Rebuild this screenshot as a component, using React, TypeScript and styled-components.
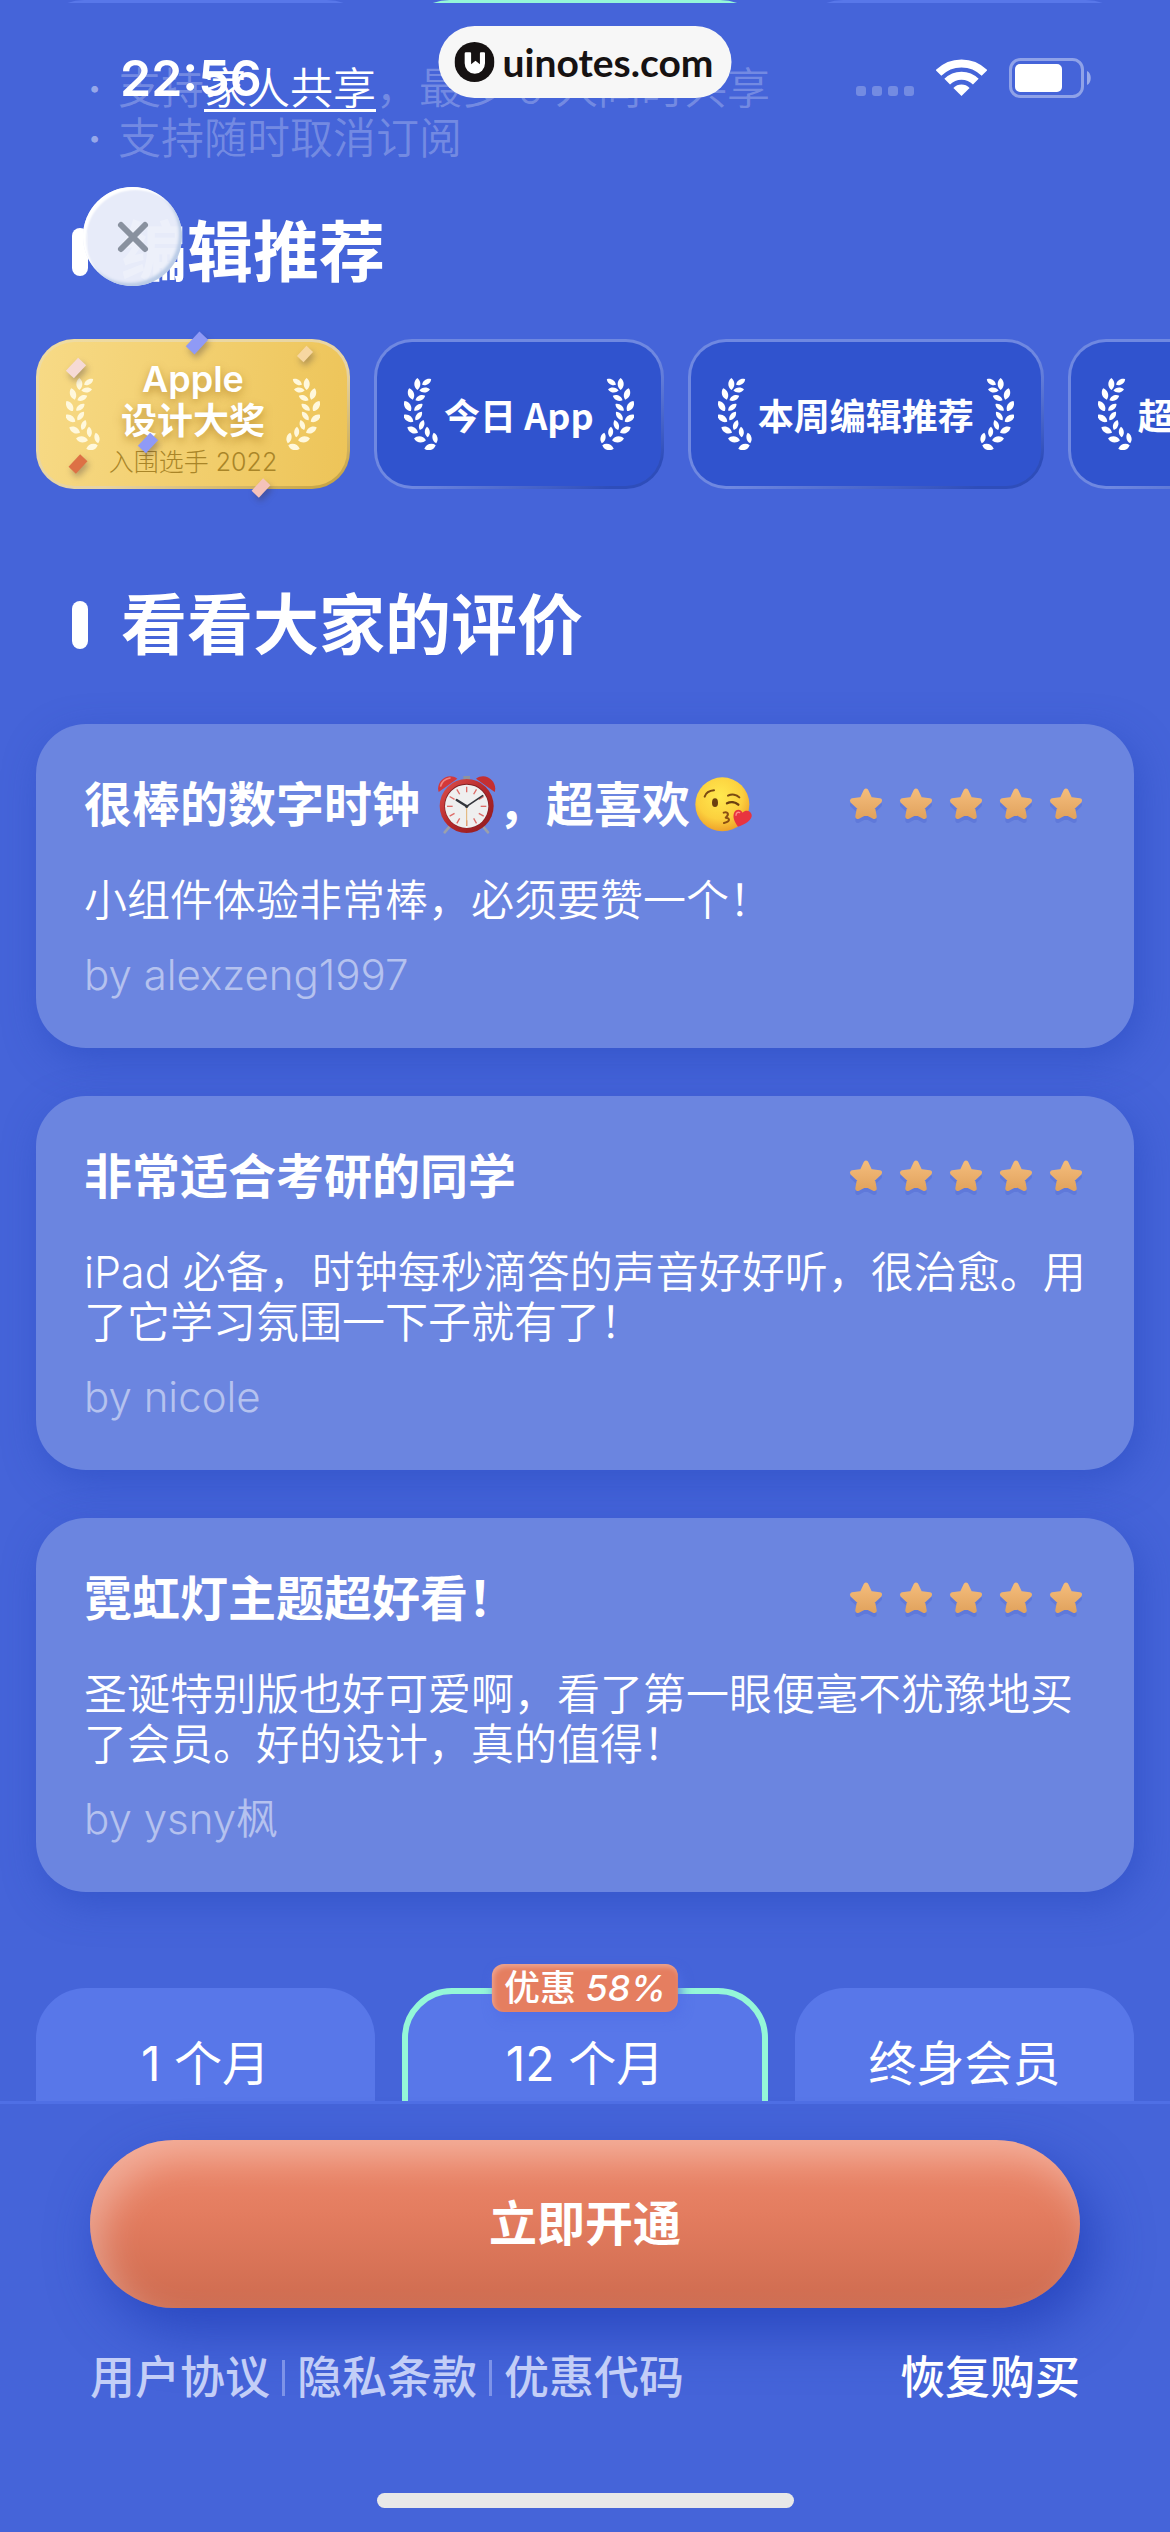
import styled, { createGlobalStyle, ThemeProvider } from "styled-components";

const theme = {
  background: "#4564d9",
  card: "#6b85e0",
  plan: "#5877e9",
  line: "#4f6fe5",
  mint: "#94f7d8",
  coral: "#e57e60",
  white: "#ffffff",
};

const GlobalStyle = createGlobalStyle`
  * {
    box-sizing: border-box;
  }
  body {
    margin: 0;
    background-color: #4564d9;
    font-family: Inter, "Noto Sans CJK SC", sans-serif;
    color: #ffffff;
  }
  button {
    font-family: inherit;
    color: inherit;
    border: none;
    padding: 0;
    background: none;
    cursor: pointer;
  }
  a {
    color: inherit;
  }
`;

const Screen = styled.div`
  position: relative;
  display: flex;
  flex-direction: column;
  height: 100vh;
  background-color: ${(props) => props.theme.background};
`;

const ScrollArea = styled.main`
  flex: 1;
  min-height: 0;
  overflow-x: hidden;
  overflow-y: auto;
  scrollbar-width: none;
`;

/* status bar */

const StatusBar = styled.header`
  position: absolute;
  top: 0;
  left: 0;
  right: 0;
  display: flex;
  align-items: center;
  justify-content: space-between;
  padding: 48px 78px 0 120px;
`;

const Time = styled.span`
  font-size: 50px;
  line-height: 60px;
  font-weight: 600;
`;

const StatusIcons = styled.div`
  display: flex;
  align-items: center;
  gap: 22px;
`;

const SignalDots = styled.div`
  display: flex;
  gap: 6px;
  padding-top: 26px;
  span {
    width: 10px;
    height: 10px;
    border-radius: 3px;
    background-color: rgba(255, 255, 255, 0.25);
  }
`;

const SiteBadge = styled.div`
  position: absolute;
  top: 26px;
  left: 50%;
  transform: translateX(-50%);
  display: flex;
  align-items: center;
  gap: 8px;
  height: 72px;
  padding: 0 18px 0 16px;
  border-radius: 36px;
  background-color: #f7f7f7;
  color: #161212;
  font-family: Lato, sans-serif;
  font-size: 39px;
  font-weight: 700;
`;

const CloseButton = styled.button`
  position: absolute;
  top: 187px;
  left: 83px;
  display: flex;
  align-items: center;
  justify-content: center;
  width: 99px;
  height: 99px;
  border-radius: 50%;
  background-color: rgba(236, 240, 250, 0.97);
  box-shadow: inset 3px 3px 2px #ffffff, inset -3px -3px 3px #b9cbe6;
`;

/* content */

const PreviousPlans = styled.div`
  display: grid;
  grid-template-columns: 339fr 366fr 339fr;
  gap: 27px;
  align-items: end;
  height: 3px;
  padding: 0 36px;
  overflow: hidden;
`;

const PlanEdge = styled.div<{ $active?: boolean }>`
  height: 100px;
  border-radius: 48px;
  background-color: ${(props) => props.theme.plan};
  border: ${(props) => (props.$active ? `6px solid ${props.theme.mint}` : "none")};
`;

const Notes = styled.ul`
  margin: 0;
  padding: 60px 36px 0 86px;
  list-style: none;
  font-size: 43px;
  line-height: 50px;
  font-weight: 350;
  color: rgba(255, 255, 255, 0.26);
  li {
    display: flex;
    gap: 15px;
    white-space: nowrap;
  }
  a {
    color: ${(props) => props.theme.white};
    text-decoration-thickness: 3px;
    text-underline-offset: 5px;
  }
`;

const Bullet = styled.span`
  width: 17px;
  text-align: center;
  color: rgba(255, 255, 255, 0.45);
  font-weight: 600;
`;

const SectionTitle = styled.h2<{ $top: number; $bottom: number }>`
  display: flex;
  align-items: center;
  gap: 33px;
  margin: ${(props) => `${props.$top}px 0 ${props.$bottom}px`};
  padding-left: 72px;
  font-size: 66px;
  line-height: 80px;
  font-weight: 600;
  &::before {
    content: "";
    width: 16px;
    height: 48px;
    border-radius: 8px;
    background-color: ${(props) => props.theme.white};
  }
`;

const Awards = styled.div`
  display: flex;
  gap: 24px;
  padding-left: 36px;
`;

const AwardCard = styled.div<{ $gold?: boolean }>`
  position: relative;
  flex: none;
  display: flex;
  align-items: center;
  justify-content: space-between;
  gap: 6px;
  min-width: ${(props) => (props.$gold ? "314px" : "0")};
  height: 150px;
  padding: 0 27px;
  border: 3px solid transparent;
  border-radius: 38px;
  font-family: "Noto Sans CJK SC", sans-serif;
  font-size: 36px;
  line-height: 40px;
  font-weight: 600;
  white-space: nowrap;
  background: ${(props) =>
    props.$gold
      ? `linear-gradient(100deg, #f7da86, #edc458) padding-box,
         linear-gradient(to bottom right, #f0dca0, #e6d3a4 60%, #c39f3a) border-box`
      : `linear-gradient(#3053ce, #3053ce) padding-box,
         linear-gradient(to bottom right, #6f88e1 55%, #2e4dba 90%) border-box`};
`;

const GoldText = styled.div`
  display: flex;
  flex-direction: column;
  align-items: center;
  padding-top: 12px;
  font-family: Inter, "Noto Sans CJK SC", sans-serif;
  line-height: 42px;
  text-shadow: 0 4px 8px rgba(150, 100, 10, 0.5);
  strong {
    font-weight: 600;
  }
  small {
    font-size: 25px;
    line-height: 40px;
    font-weight: 300;
    color: #a98528;
    text-shadow: none;
    margin: 0 -24px;
  }
`;

const Confetti = styled.svg`
  position: absolute;
  top: -18px;
  left: -3px;
  filter: drop-shadow(2px 4px 3px rgba(60, 50, 60, 0.35));
`;

const Reviews = styled.div`
  display: flex;
  flex-direction: column;
  gap: 48px;
  padding: 0 36px;
`;

const ReviewCard = styled.article`
  padding: 51px 48px 48px;
  border-radius: 50px;
  background-color: ${(props) => props.theme.card};
  box-shadow: 6px 12px 36px rgba(38, 72, 190, 0.5);
`;

const ReviewHead = styled.div`
  display: flex;
  align-items: center;
  justify-content: space-between;
  height: 60px;
  h3 {
    display: flex;
    align-items: center;
    margin: 0;
    font-size: 48px;
    line-height: 60px;
    font-weight: 600;
    white-space: pre;
  }
  h3 svg {
    margin-left: 4px;
  }
`;

const Stars = styled.div`
  display: flex;
  gap: 10px;
`;

const ReviewText = styled.p`
  margin: 40px -8px 25px 0;
  font-size: 43px;
  line-height: 50px;
  font-weight: 350;
`;

const ReviewAuthor = styled.div`
  font-size: 42px;
  line-height: 50px;
  font-weight: 350;
  color: rgba(255, 255, 255, 0.5);
`;

const Plans = styled.div`
  display: grid;
  grid-template-columns: 339fr 366fr 339fr;
  gap: 27px;
  padding: 96px 36px 48px;
`;

const Plan = styled.button<{ $active?: boolean }>`
  position: relative;
  display: flex;
  justify-content: center;
  height: 330px;
  padding-top: ${(props) => (props.$active ? "40px" : "46px")};
  border-radius: 50px;
  background-color: ${(props) => props.theme.plan};
  border: ${(props) => (props.$active ? `6px solid ${props.theme.mint}` : "none")};
  font-size: 48px;
  line-height: 60px;
  font-weight: 400;
`;

const Discount = styled.span`
  position: absolute;
  top: -30px;
  left: 50%;
  transform: translateX(-50%);
  height: 48px;
  padding: 0 12px;
  border-radius: 12px;
  background-color: ${(props) => props.theme.coral};
  box-shadow: inset 2px 3px 5px rgba(255, 255, 255, 0.3), 3px 6px 12px rgba(80, 110, 230, 0.8);
  font-size: 36px;
  line-height: 48px;
  font-weight: 500;
  white-space: nowrap;
`;

/* footer */

const Footer = styled.footer`
  position: relative;
  padding: 36px 90px 24px;
  border-top: 3px solid ${(props) => props.theme.line};
  background-color: ${(props) => props.theme.background};
`;

const SubscribeButton = styled.button`
  display: block;
  width: 100%;
  height: 168px;
  border-radius: 84px;
  background: linear-gradient(#ee8a6d, #e37c5f 45%, #ce6b4f);
  box-shadow: inset 12px 18px 36px rgba(255, 255, 255, 0.32), 14px 22px 54px rgba(28, 58, 180, 0.7);
  font-size: 48px;
  line-height: 60px;
  font-weight: 600;
`;

const FooterLinks = styled.nav`
  display: flex;
  align-items: center;
  gap: 12px;
  margin-top: 40px;
  font-size: 45px;
  line-height: 60px;
  font-weight: 500;
  color: #c3cef7;
  a {
    text-decoration: none;
  }
  a:last-child {
    margin-left: auto;
    color: ${(props) => props.theme.white};
  }
`;

const Divider = styled.span`
  width: 3px;
  height: 36px;
  background-color: #7d93e8;
`;

const HomeIndicator = styled.div`
  width: 417px;
  height: 15px;
  margin: 85px auto 0;
  border-radius: 8px;
  background-color: #e8e8e8;
`;

/* drawings */

const outerLeaves = [
  [66, 40, 0],
  [47, 70, -18],
  [37, 106, -32],
  [39, 143, -55],
  [52, 178, -62],
  [74, 206, -82],
  [104, 229, 72],
];

const innerLeaves = [
  [94, 34, 58],
  [88, 58, 84],
  [75, 82, 66],
  [69, 110, 52],
  [70, 136, 38],
  [79, 163, 20],
  [96, 184, -4],
  [119, 202, -14],
];

const Laurel = ({ flip, soft }: { flip?: boolean; soft?: boolean }) => (
  <svg width="34" height="72" viewBox="26 22 102 216" fill={soft ? "#fff8dc" : "#fff"} aria-hidden="true">
    <g transform={flip ? "translate(154 0) scale(-1 1)" : undefined}>
      {outerLeaves.map(([x, y, r]) => (
        <path key={y} d="M0 -18C12 -9 12 9 0 18C-12 9 -12 -9 0 -18Z" transform={`translate(${x} ${y}) rotate(${r})`} />
      ))}
      {innerLeaves.map(([x, y, r]) => (
        <path key={y} d="M0 -16C10 -8 10 8 0 16C-10 8 -10 -8 0 -16Z" transform={`translate(${x} ${y}) rotate(${r})`} />
      ))}
    </g>
  </svg>
);

const Star = () => (
  <svg width="40" height="40" viewBox="0 0 40 40" aria-hidden="true">
    <defs>
      <linearGradient id="star" x1="0" y1="0" x2="0" y2="1">
        <stop offset="0" stopColor="#f3bb7a" />
        <stop offset="1" stopColor="#e2a45f" />
      </linearGradient>
    </defs>
    <path
      d="M20 7L24 15.600L33.500 16.800L26.500 23.300L28.200 32.500L20 28.200L11.800 32.500L13.500 23.300L6.500 16.800L16 15.600Z"
      transform="translate(0 3)"
      fill="#4a64cf"
      stroke="#4a64cf"
      strokeWidth="5"
      strokeLinejoin="round"
      opacity="0.35"
    />
    <path
      d="M20 6L24 14.600L33.500 15.800L26.500 22.300L28.200 31.500L20 27.200L11.800 31.500L13.500 22.300L6.500 15.800L16 14.600Z"
      fill="url(#star)"
      stroke="url(#star)"
      strokeWidth="5"
      strokeLinejoin="round"
    />
  </svg>
);

const ticks = Array.from({ length: 12 }, (_, i) => i * 30);

const ClockEmoji = () => (
  <svg width="62" height="60" viewBox="50 45 186 180" role="img" aria-label="⏰">
    <defs>
      <linearGradient id="ring" x1="0" y1="0" x2="1" y2="1">
        <stop offset="0" stopColor="#e0544f" />
        <stop offset="0.500" stopColor="#b5282b" />
        <stop offset="1" stopColor="#8c1a1f" />
      </linearGradient>
    </defs>
    <path d="M94 196L76 217M188 196L206 217" stroke="#9aa0ad" strokeWidth="8" strokeLinecap="round" />
    <path d="M132 48h20v14h-20z" fill="#8e939e" />
    <path d="M58 96C48 66 84 34 114 56Z" fill="#d3383a" />
    <path d="M226 96C236 66 200 34 170 56Z" fill="#c42f32" />
    <path d="M64 78C68 64 80 56 92 54" stroke="#f08580" strokeWidth="5" fill="none" strokeLinecap="round" />
    <circle cx="142" cy="138" r="81" fill="url(#ring)" />
    <circle cx="142" cy="138" r="67" fill="#7f2024" />
    <circle cx="142" cy="139" r="65" fill="#efefef" />
    {ticks.map((angle) => (
      <path key={angle} d="M142 80v17" stroke="#dd6a66" strokeWidth="4" transform={`rotate(${angle} 142 139)`} />
    ))}
    <path d="M142 139v58" stroke="#e0b070" strokeWidth="3" />
    <path d="M142 139L112 120" stroke="#33363c" strokeWidth="7" strokeLinecap="round" />
    <path d="M142 139L190 107" stroke="#33363c" strokeWidth="5" strokeLinecap="round" />
    <circle cx="142" cy="139" r="5" fill="#33363c" />
  </svg>
);

const KissEmoji = () => (
  <svg width="60" height="58" viewBox="818 50 180 174" role="img" aria-label="😘">
    <defs>
      <radialGradient id="face" cx="0.450" cy="0.350" r="0.650">
        <stop offset="0" stopColor="#ffe94f" />
        <stop offset="0.650" stopColor="#fcd03e" />
        <stop offset="1" stopColor="#eea22a" />
      </radialGradient>
    </defs>
    <circle cx="903" cy="135" r="81" fill="url(#face)" />
    <path d="M850 112C854 100 864 94 878 93" stroke="#7b4a12" strokeWidth="6" fill="none" strokeLinecap="round" />
    <path d="M920 109C932 103 946 106 954 114" stroke="#7b4a12" strokeWidth="6" fill="none" strokeLinecap="round" />
    <ellipse cx="881" cy="130" rx="9" ry="13" fill="#6b3f10" />
    <path d="M917 132C928 126 942 128 951 136" stroke="#6b3f10" strokeWidth="7" fill="none" strokeLinecap="round" />
    <path
      d="M907 160C918 156 926 164 913 175C928 176 926 188 908 191"
      stroke="#8a4f12"
      strokeWidth="6"
      fill="none"
      strokeLinecap="round"
      strokeLinejoin="round"
    />
    <path
      d="M950 202C938 186 934 172 938 161C943 148 958 148 964 160C973 150 988 154 991 166C994 180 972 195 950 202Z"
      fill="#e8343f"
    />
    <path d="M944 168C944 160 950 157 955 160" stroke="#ff8f8c" strokeWidth="4" fill="none" strokeLinecap="round" />
  </svg>
);

const WifiIcon = () => (
  <svg width="51" height="38" viewBox="0 0 51 38" fill="none" aria-hidden="true">
    <path d="M2.500 14A32.500 32.500 0 0 1 48.500 14" stroke="#fff" strokeWidth="8" />
    <path d="M11.200 22.700A20.200 20.200 0 0 1 39.800 22.700" stroke="#fff" strokeWidth="8" />
    <path d="M25.500 37L17.400 29A11.400 11.400 0 0 1 33.600 29Z" fill="#fff" />
  </svg>
);

const BatteryIcon = () => (
  <svg width="83" height="40" viewBox="0 0 83 40" fill="none" aria-hidden="true">
    <rect x="1.500" y="1.500" width="72" height="37" rx="10" stroke="#fff" strokeOpacity="0.400" strokeWidth="3" />
    <rect x="6" y="6" width="47" height="28" rx="5" fill="#fff" />
    <path d="M78 13C83 15 83 25 78 27Z" fill="#fff" fillOpacity="0.450" />
  </svg>
);

const BookmarkLogo = () => (
  <svg width="40" height="40" viewBox="75 67 118 118" aria-hidden="true">
    <circle cx="134" cy="126" r="59" fill="#161212" />
    <path
      d="M109 97H121Q124 97 124 100V133L137 122L150 133V100Q150 97 153 97H162Q165 97 165 100V130A30 31 0 0 1 105 130V101Q105 97 109 97Z"
      fill="#fff"
    />
  </svg>
);

const pieces = [
  { x: 161, y: 19, w: 12, h: 20, color: "#8f9af6" },
  { x: 40, y: 44, w: 11, h: 18, color: "#f6dad6" },
  { x: 269, y: 30, w: 9, h: 14, color: "#f7d7a2" },
  { x: 112, y: 119, w: 11, h: 18, color: "#8f9af6" },
  { x: 42, y: 140, w: 10, h: 17, color: "#dd7145" },
  { x: 225, y: 164, w: 10, h: 17, color: "#f5c2ba" },
];

const awards = ["今日 App", "本周编辑推荐", "超过百国推荐"];

const reviews = [
  {
    title: (
      <>
        很棒的数字时钟 <ClockEmoji />，超喜欢
        <KissEmoji />
      </>
    ),
    text: "小组件体验非常棒，必须要赞一个！",
    author: "alexzeng1997",
  },
  {
    title: "非常适合考研的同学",
    text: "iPad 必备，时钟每秒滴答的声音好好听，很治愈。用了它学习氛围一下子就有了！",
    author: "nicole",
  },
  {
    title: "霓虹灯主题超好看！",
    text: "圣诞特别版也好可爱啊，看了第一眼便毫不犹豫地买了会员。好的设计，真的值得！",
    author: "ysny枫",
  },
];

export default function App() {
  return (
    <ThemeProvider theme={theme}>
      <GlobalStyle />
      <Screen lang="zh-CN">
        <ScrollArea>
          <PreviousPlans>
            <PlanEdge />
            <PlanEdge $active />
            <PlanEdge />
          </PreviousPlans>
          <Notes>
            <li>
              <Bullet>·</Bullet>
              <span>
                支持<a href="#family">家人共享</a>，最多 6 人同时共享
              </span>
            </li>
            <li>
              <Bullet>·</Bullet>
              <span>支持随时取消订阅</span>
            </li>
          </Notes>

          <SectionTitle $top={49} $bottom={47}>
            编辑推荐
          </SectionTitle>
          <Awards>
            <AwardCard $gold>
              <Laurel soft />
              <GoldText>
                <strong>Apple</strong>
                <span>设计大奖</span>
                <small>入围选手 2022</small>
              </GoldText>
              <Laurel soft flip />
              <Confetti width="320" height="190" viewBox="0 0 320 190" aria-hidden="true">
                {pieces.map((p) => (
                  <rect
                    key={`${p.x}-${p.y}`}
                    x={p.x - p.w / 2}
                    y={p.y - p.h / 2}
                    width={p.w}
                    height={p.h}
                    fill={p.color}
                    transform={`rotate(43 ${p.x} ${p.y})`}
                  />
                ))}
              </Confetti>
            </AwardCard>
            {awards.map((name) => (
              <AwardCard key={name}>
                <Laurel />
                {name}
                <Laurel flip />
              </AwardCard>
            ))}
          </Awards>

          <SectionTitle $top={96} $bottom={59}>
            看看大家的评价
          </SectionTitle>
          <Reviews>
            {reviews.map((review) => (
              <ReviewCard key={review.author}>
                <ReviewHead>
                  <h3>{review.title}</h3>
                  <Stars role="img" aria-label="5">
                    <Star />
                    <Star />
                    <Star />
                    <Star />
                    <Star />
                  </Stars>
                </ReviewHead>
                <ReviewText>{review.text}</ReviewText>
                <ReviewAuthor>by {review.author}</ReviewAuthor>
              </ReviewCard>
            ))}
          </Reviews>

          <Plans>
            <Plan type="button">1 个月</Plan>
            <Plan type="button" $active>
              <Discount>
                优惠 <em>58%</em>
              </Discount>
              12 个月
            </Plan>
            <Plan type="button">终身会员</Plan>
          </Plans>
        </ScrollArea>

        <Footer>
          <SubscribeButton type="button">立即开通</SubscribeButton>
          <FooterLinks>
            <a href="#terms">用户协议</a>
            <Divider />
            <a href="#privacy">隐私条款</a>
            <Divider />
            <a href="#promo">优惠代码</a>
            <a href="#restore">恢复购买</a>
          </FooterLinks>
          <HomeIndicator />
        </Footer>

        <StatusBar>
          <Time>22:56</Time>
          <StatusIcons>
            <SignalDots>
              <span />
              <span />
              <span />
              <span />
            </SignalDots>
            <WifiIcon />
            <BatteryIcon />
          </StatusIcons>
        </StatusBar>
        <SiteBadge>
          <BookmarkLogo />
          uinotes.com
        </SiteBadge>
        <CloseButton type="button" aria-label="关闭">
          <svg width="36" height="36" viewBox="0 0 36 36" aria-hidden="true">
            <path d="M6 6L30 30M30 6L6 30" stroke="#89919f" strokeWidth="6" strokeLinecap="round" />
          </svg>
        </CloseButton>
      </Screen>
    </ThemeProvider>
  );
}
